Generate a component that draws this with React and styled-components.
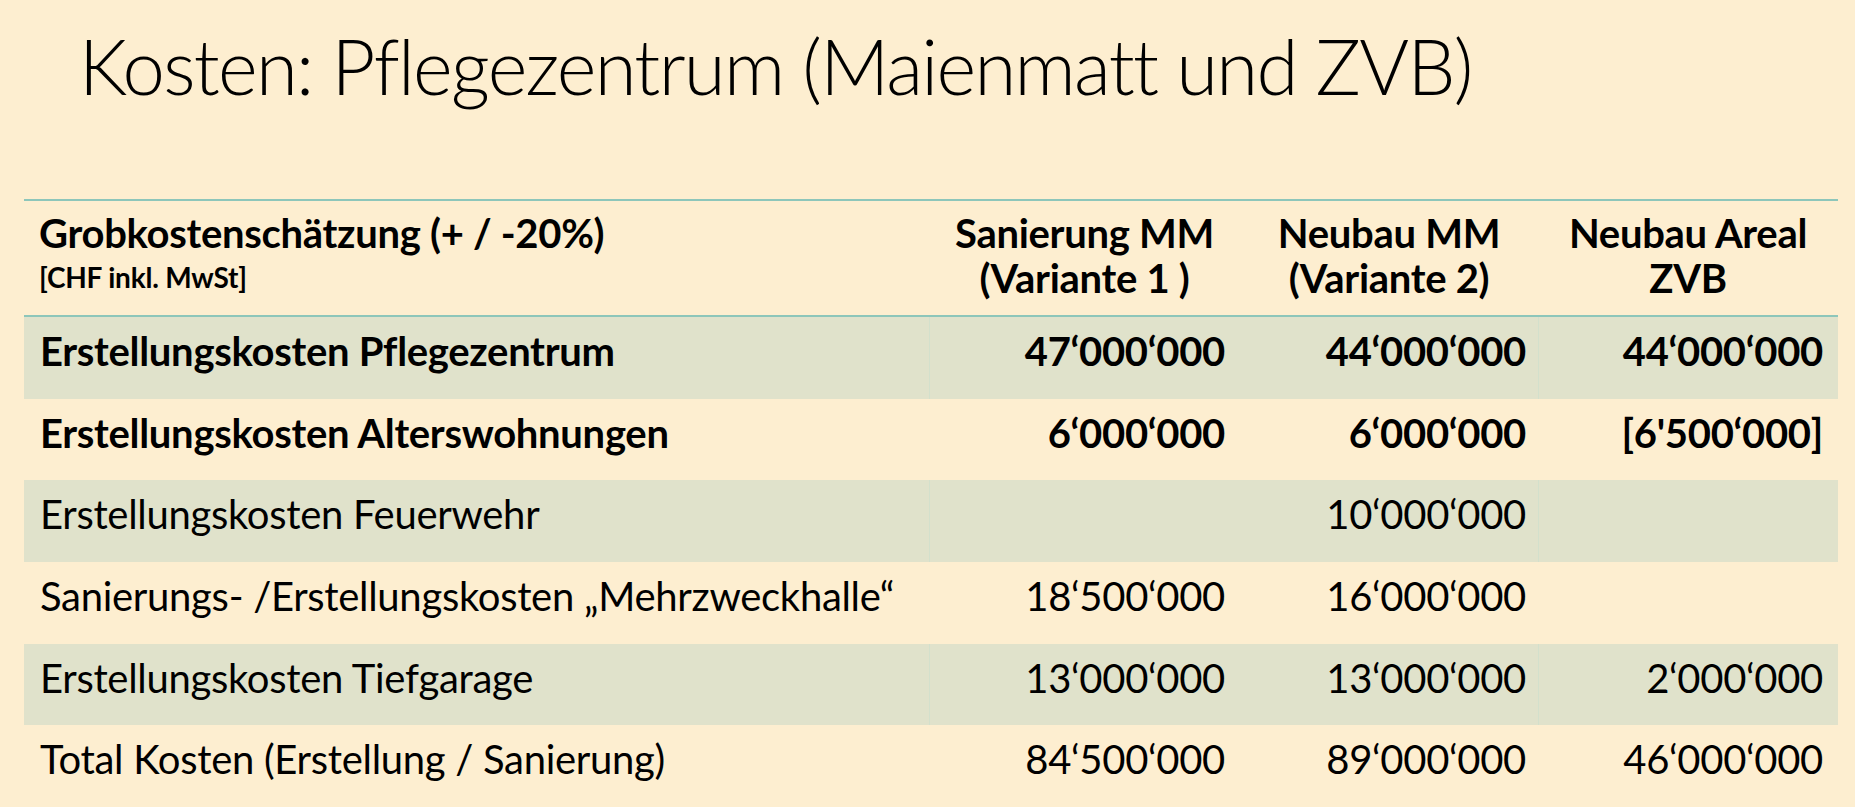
import React from "react"
import styled, { createGlobalStyle } from "styled-components"

const GlobalStyle = createGlobalStyle`
  html, body {
    margin: 0;
    padding: 0;
    background: #fdeed0;
  }
  body {
    font-family: Lato, "Open Sans", sans-serif;
    color: #000;
  }
`

const Slide = styled.div`
  width: 1855px;
  height: 807px;
  overflow: hidden;
  background: #fdeed0;
  padding: 23px 17px 0 24px;
  box-sizing: border-box;
`

const Title = styled.h1`
  margin: 0 0 91px 55px;
  height: 85px;
  font-size: 76px;
  line-height: 85px;
  font-weight: 300;
  letter-spacing: -1.7px;
  white-space: nowrap;
`

const Table = styled.div`
  display: grid;
  grid-template-columns: 905px 311px 298px 300px;
  width: 1814px;
  letter-spacing: -0.3px;
`

const HeaderRow = styled.div`
  display: contents;
`

const HeadCell = styled.div`
  height: 118px;
  box-sizing: border-box;
  border-top: 2px solid #8dc6ba;
  border-bottom: 2px solid #8dc6ba;
  padding: 10px 15px 0;
  font-weight: 700;
  font-size: 40px;
  line-height: 45px;
  text-align: ${(p) => (p.center ? "center" : "left")};
  white-space: nowrap;
`

const SubNote = styled.div`
  margin-top: 5px;
  font-size: 28px;
  line-height: 32px;
  letter-spacing: -0.2px;
`

const Cell = styled.div`
  height: 81.67px;
  box-sizing: border-box;
  padding: 10px ${(p) => (p.tight ? "12px" : "15px")} 0 15px;
  font-size: 40px;
  line-height: 48px;
  font-weight: ${(p) => (p.bold ? 700 : 400)};
  background: ${(p) => (p.band ? "#e0e2cb" : "transparent")};
  text-align: ${(p) => (p.num ? "right" : "left")};
  white-space: nowrap;
  border-left: ${(p) =>
    p.divider && p.band ? "1px solid #d3e0cc" : "1px solid transparent"};
`

const rows = [
  { label: "Erstellungskosten Pflegezentrum", bold: true, values: ["47‘000‘000", "44‘000‘000", "44‘000‘000"] },
  { label: "Erstellungskosten Alterswohnungen", bold: true, values: ["6‘000‘000", "6‘000‘000", "[6'500‘000]"] },
  { label: "Erstellungskosten Feuerwehr", values: ["", "10‘000‘000", ""] },
  { label: "Sanierungs- /Erstellungskosten „Mehrzweckhalle“", values: ["18‘500‘000", "16‘000‘000", ""] },
  { label: "Erstellungskosten Tiefgarage", values: ["13‘000‘000", "13‘000‘000", "2‘000‘000"] },
  { label: "Total Kosten (Erstellung / Sanierung)", values: ["84‘500‘000", "89‘000‘000", "46‘000‘000"] },
]

const App = () => (
  <>
    <GlobalStyle />
    <Slide>
      <Title>Kosten: Pflegezentrum (Maienmatt und ZVB)</Title>
      <Table>
        <HeaderRow>
          <HeadCell>
            Grobkostenschätzung (+ / -20%)
            <SubNote>[CHF inkl. MwSt]</SubNote>
          </HeadCell>
          <HeadCell center>
            Sanierung MM
            <br />
            (Variante 1 )
          </HeadCell>
          <HeadCell center>
            Neubau MM
            <br />
            (Variante 2)
          </HeadCell>
          <HeadCell center>
            Neubau Areal
            <br />
            ZVB
          </HeadCell>
        </HeaderRow>
        {rows.map((row, i) => {
          const band = i % 2 === 0
          return (
            <React.Fragment key={row.label}>
              <Cell band={band} bold={row.bold}>
                {row.label}
              </Cell>
              {row.values.map((v, j) => (
                <Cell
                  key={j}
                  band={band}
                  bold={row.bold}
                  num
                  divider={j !== 1}
                  tight={j === 1}
                >
                  {v}
                </Cell>
              ))}
            </React.Fragment>
          )
        })}
      </Table>
    </Slide>
  </>
)

export default App
